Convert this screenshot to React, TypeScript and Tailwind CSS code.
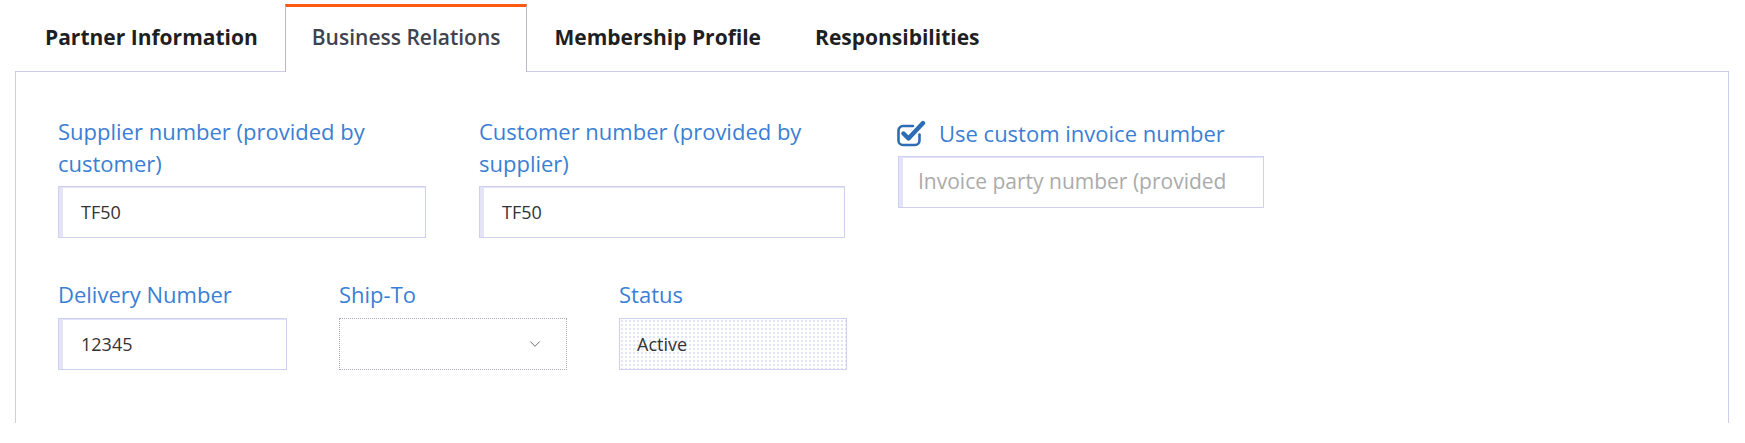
import { ChevronDown } from 'lucide-react';

const font = { fontFamily: "'Open Sans', 'Noto Sans', sans-serif" };

function CheckIcon() {
    return (
        <svg width="30" height="28" viewBox="0 0 30 28" fill="none">
            <path
                d="M17 7H7a4.5 4.5 0 0 0-4.5 4.5v10A4.5 4.5 0 0 0 7 26h12a4.5 4.5 0 0 0 4.5-4.5v-6"
                stroke="#2c6db5"
                strokeWidth="2.6"
                strokeLinecap="round"
            />
            <path d="M7.5 14.5l5 5L27 4" stroke="#2c6db5" strokeWidth="4.4" strokeLinecap="round" strokeLinejoin="round" />
        </svg>
    );
}

function Label({ children, className = '' }: { children: React.ReactNode; className?: string }) {
    return <div className={`text-[22px] leading-[32px] text-[#3b7fd4] ${className}`}>{children}</div>;
}

function TextBox({ value, placeholder }: { value?: string; placeholder?: string }) {
    return (
        <div className="h-[52px] flex items-center border border-[#cfcff2] shadow-[inset_4px_1px_0_#e4e4f8] pl-[22px] overflow-hidden whitespace-nowrap">
            {value ? (
                <span className="text-[18px] text-[#333]">{value}</span>
            ) : (
                <span className="pl-[-3px] -ml-[3px] text-[21px] text-[#ababab]">{placeholder}</span>
            )}
        </div>
    );
}

export default function App() {
    const tabs = ['Partner Information', 'Business Relations', 'Membership Profile', 'Responsibilities'];

    return (
        <div className="w-[1745px] h-[443px] bg-white overflow-hidden" style={font}>
            {/* ── Tabs ── */}
            <div className="flex items-start pl-[18px] pt-[4px]">
                {tabs.map((t) =>
                    t === 'Business Relations' ? (
                        <div
                            key={t}
                            className="relative z-10 -mb-px h-[68px] flex items-center px-[26px] pb-[3px] bg-white border-t-[3px] border-t-[#ff5a14] border-x border-x-[#b9b9c8] text-[21px] font-semibold text-[#3f4350]"
                        >
                            {t}
                        </div>
                    ) : (
                        <div key={t} className="h-[67px] flex items-center px-[27px] text-[21px] font-bold text-[#1f1f1f]">
                            {t}
                        </div>
                    )
                )}
            </div>

            {/* ── Panel ── */}
            <div className="ml-[15px] mr-[16px] h-[352px] border-t border-x border-[#cdcdf0] pt-[43px] pl-[42px]">
                {/* Row 1 */}
                <div className="grid grid-cols-[368px_366px_366px] gap-x-[53px] items-start">
                    <div>
                        <Label className="mb-[7px]">Supplier number (provided by customer)</Label>
                        <TextBox value="TF50" />
                    </div>
                    <div>
                        <Label className="mb-[7px]">Customer number (provided by supplier)</Label>
                        <TextBox value="TF50" />
                    </div>
                    <div>
                        <div className="mt-[2px] h-[32px] flex items-center gap-[13px] -ml-[2px]">
                            <CheckIcon />
                            <Label>Use custom invoice number</Label>
                        </div>
                        <div className="mt-[7px]">
                            <TextBox placeholder="Invoice party number (provided" />
                        </div>
                    </div>
                </div>

                {/* Row 2 */}
                <div className="mt-[40px] grid grid-cols-[229px_228px_228px] gap-x-[52px] items-start">
                    <div>
                        <Label className="mb-[8px]">Delivery Number</Label>
                        <TextBox value="12345" />
                    </div>
                    <div>
                        <Label className="mb-[8px]">Ship-To</Label>
                        <div className="h-[52px] flex items-center justify-end border border-dotted border-[#a8a8b8] pr-[22px]">
                            <ChevronDown size={18} strokeWidth={1.3} color="#6b6b6b" />
                        </div>
                    </div>
                    <div>
                        <Label className="mb-[8px]">Status</Label>
                        <div className="h-[52px] flex items-center border border-[#cfcff2] pl-[17px] text-[18px] text-[#333] bg-[radial-gradient(#e4e4f9_1px,transparent_1px)] bg-[length:4px_4px]">
                            Active
                        </div>
                    </div>
                </div>
            </div>
        </div>
    );
}
